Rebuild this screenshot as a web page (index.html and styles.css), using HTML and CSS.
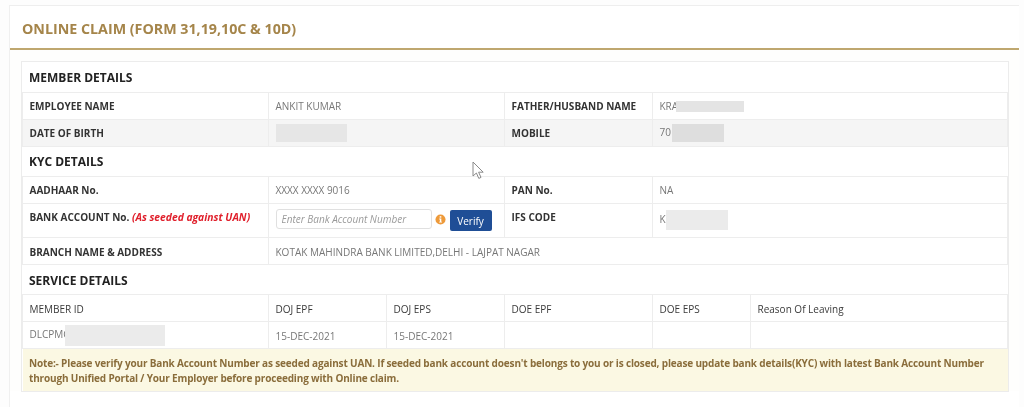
FILE: index.html
```html
<!DOCTYPE html>
<html lang="en">
<head>
<meta charset="utf-8">
<title>Online Claim</title>
<link rel="stylesheet" href="styles.css">
</head>
<body>
<main class="panel">
  <header class="panel-head"><h1>ONLINE CLAIM (FORM 31,19,10C &amp; 10D)</h1></header>
  <div class="panel-body">
    <table class="claim">
      <colgroup>
        <col class="c1"><col class="c2"><col class="c3"><col class="c4"><col class="c5"><col class="c6">
      </colgroup>
      <tbody>
        <tr class="section first"><th colspan="6">MEMBER DETAILS</th></tr>
        <tr class="r-a">
          <td class="lbl">EMPLOYEE NAME</td><td colspan="2" class="val">ANKIT KUMAR</td>
          <td class="lbl">FATHER/HUSBAND NAME</td><td colspan="2" class="val"><span class="clip">KRA</span><span class="mask m-father"></span></td>
        </tr>
        <tr class="r-b shade">
          <td class="lbl">DATE OF BIRTH</td><td colspan="2" class="val"><span class="mask m-dob"></span></td>
          <td class="lbl">MOBILE</td><td colspan="2" class="val">70<span class="mask m-mobile"></span></td>
        </tr>
        <tr class="section"><th colspan="6">KYC DETAILS</th></tr>
        <tr class="r-c">
          <td class="lbl">AADHAAR No.</td><td colspan="2" class="val">XXXX XXXX 9016</td>
          <td class="lbl">PAN No.</td><td colspan="2" class="val">NA</td>
        </tr>
        <tr class="r-d">
          <td class="lbl top">BANK ACCOUNT No. <em>(As seeded against UAN)</em></td>
          <td colspan="2" class="val verify-cell">
            <div class="verify">
              <input class="acct" type="text" placeholder="Enter Bank Account Number">
              <svg class="info" viewBox="0 0 12 12" width="11" height="11" aria-hidden="true"><circle cx="6" cy="6" r="5.5" fill="#ee9a3a"/><rect x="5.1" y="2.4" width="1.8" height="1.6" fill="#fff"/><path d="M4.6 5h2.3v3.4h.7v1H4.5v-1h.8V6h-.7z" fill="#fff"/></svg>
              <button class="btn" type="button">Verify</button>
            </div>
          </td>
          <td class="lbl top">IFS CODE</td><td colspan="2" class="val top">K<span class="mask m-ifs"></span></td>
        </tr>
        <tr class="r-e">
          <td class="lbl">BRANCH NAME &amp; ADDRESS</td><td colspan="5" class="val">KOTAK MAHINDRA BANK LIMITED,DELHI - LAJPAT NAGAR</td>
        </tr>
        <tr class="section service"><th colspan="6">SERVICE DETAILS</th></tr>
        <tr class="r-f heads">
          <td>MEMBER ID</td><td>DOJ EPF</td><td>DOJ EPS</td><td>DOE EPF</td><td>DOE EPS</td><td>Reason Of Leaving</td>
        </tr>
        <tr class="r-g">
          <td class="val">DLCPMC<span class="mask m-member"></span></td><td class="val">15-DEC-2021</td><td class="val">15-DEC-2021</td><td></td><td></td><td></td>
        </tr>
        <tr class="note"><td colspan="6">Note:- Please verify your Bank Account Number as seeded against UAN. If seeded bank account doesn't belongs to you or is closed, please update bank details(KYC) with latest Bank Account Number through Unified Portal / Your Employer before proceeding with Online claim.</td></tr>
      </tbody>
    </table>
  </div>
  <svg class="cursor" viewBox="0 0 14 20" width="14" height="20" aria-hidden="true"><path d="M1 1v14l3.4-3 2.4 5.4 2.2-1-2.4-5.2h4.6z" fill="#fff" stroke="#8a8a8a" stroke-width="1"/></svg>
</main>
</body>
</html>
```
FILE: styles.css
```css
* { box-sizing: border-box; }
html, body { margin: 0; height: 100%; overflow: hidden; background: #fdfdfd; }
body {
  padding: 5px 5px 0 9px;
  font-family: "Open Sans", "Noto Sans", sans-serif;
  font-size: 10px;
  color: #333;
  filter: blur(0.35px);
}
.panel {
  position: relative;
  height: 402px;
  background: #fff;
  border-top: 1px solid #eeeeee;
  border-left: 1px solid #f0f0f0;
}
.panel-head {
  height: 44px;
  padding-left: 12px;
  display: flex;
  align-items: center;
  border-bottom: 2px solid #bfa76f;
}
.panel-head h1 {
  margin: 0;
  font-size: 14.26px;
  font-weight: 700;
  color: #a5854a;
  position: relative;
  top: 1px;
}
.panel-body { padding: 12px 12px 0 12px; background: #fefefd; }
.claim {
  width: 985px;
  table-layout: fixed;
  border-collapse: collapse;
  background: #fff;
  outline: 1px solid #ececec;
}
.c1 { width: 246px; }
.c2 { width: 118px; }
.c3 { width: 118px; }
.c4 { width: 148px; }
.c5 { width: 98px; }
.c6 { width: 257px; }
.claim td, .claim th {
  border: 1px solid #ededed;
  padding: 0 6.5px;
  text-align: left;
  vertical-align: middle;
  white-space: nowrap;
}
.section th {
  font-size: 12px;
  font-weight: 700;
  color: #222;
  border-left: 0;
  border-right: 0;
}
.section th { height: 30px; }
.section.first th { border-top: 0; padding-top: 1px; }
.r-a td { height: 27px; }
.r-b td { height: 27px; }
.r-c td { height: 27px; }
.r-d td { height: 34px; }
.claim .r-e td, .claim .r-f td, .claim .r-g td { height: 27px; padding-top: 2px; }
.claim .service th { padding-top: 2px; }
.shade td { background: #f5f5f5; }
.claim .lbl { font-weight: 700; color: #333; }
.claim .val { color: #777; }
.heads td { color: #3a3a3a; }
.claim .top { vertical-align: top; padding-top: 6px; }
.lbl em { color: #e0202c; font-size: 10.3px; font-style: italic; font-weight: 700; }
.clip { display: inline-block; }
.mask { display: inline-block; vertical-align: middle; background: #e4e4e4; }
.m-father { width: 68px; height: 11px; margin-left: -2px; }
.m-dob { width: 71px; height: 18px; background: #e6e6e6; }
.m-mobile { width: 52px; height: 18px; margin-left: 1px; background: #dedede; }
.m-ifs { width: 62px; height: 20px; margin-left: 0; background: #ebebeb; }
.m-member { width: 100px; height: 21px; margin-left: -5px; background: #ebebeb; }
.verify-cell { padding-right: 0; }
.verify { display: flex; align-items: center; height: 22px; }
.acct {
  width: 156px;
  height: 20px;
  margin-top: -2px;
  padding: 0 5px;
  border: 1px solid #e0e0e0;
  border-radius: 3px;
  background: #fff;
  font: italic 10px "Open Sans", sans-serif;
}
.acct::placeholder { color: #9a9a9a; opacity: 1; }
.info { margin: -2px 0 0 3px; flex: none; }
.btn {
  width: 42px;
  height: 21px;
  margin: 1px 0 0 4px;
  padding: 0;
  border: 0;
  border-radius: 2px;
  background: #1f4e96;
  color: #fff;
  font: 10px "Open Sans", sans-serif;
}
.claim .note td {
  height: 43px;
  padding: 2px 6.5px 0;
  background: #fbf8e3;
  color: #8a6d3b;
  font-weight: 700;
  letter-spacing: -0.16px;
  white-space: normal;
  line-height: 15px;
  border: 0;
}
.cursor { position: absolute; left: 462px; top: 155px; }
```
